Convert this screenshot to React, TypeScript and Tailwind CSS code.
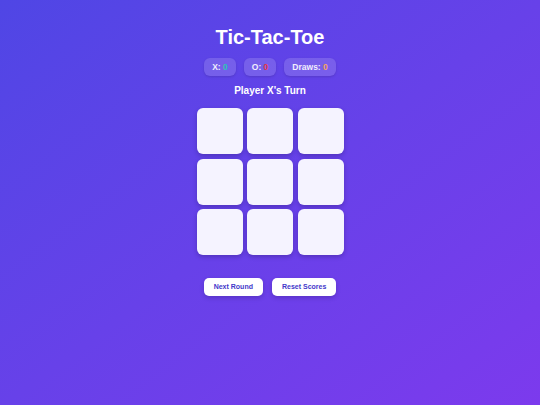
const cells = Array.from({ length: 9 }, (_, i) => i);

const App = () => {
  return (
    <div className="min-h-screen w-full bg-gradient-to-br from-[#4f46e5] to-[#7c3aed] flex flex-col items-center pt-[25px] text-white" style={{ fontFamily: '"Liberation Sans", Arial, sans-serif' }}>
      <h1 className="text-[20px] leading-[24px] font-bold">Tic-Tac-Toe</h1>

      {/* Scores */}
      <div className="mt-[9px] flex gap-2">
        <div className="h-[18px] px-2 rounded-[6px] bg-white/15 shadow-sm flex items-center text-[8.5px] font-bold text-white/90">
          X:&nbsp;<span className="text-[#2ec4b6]">0</span>
        </div>
        <div className="h-[18px] px-2 rounded-[6px] bg-white/15 shadow-sm flex items-center text-[8.5px] font-bold text-white/90">
          O:&nbsp;<span className="text-[#e63946]">0</span>
        </div>
        <div className="h-[18px] px-2 rounded-[6px] bg-white/15 shadow-sm flex items-center text-[8.5px] font-bold text-white/90">
          Draws:&nbsp;<span className="text-[#f4a261]">0</span>
        </div>
      </div>

      <p className="mt-[9px] text-[10px] leading-[12px] font-bold">Player X's Turn</p>

      {/* Board */}
      <div className="mt-[11px] grid grid-cols-3 gap-[4.5px]">
        {cells.map((c) => (
          <button key={c} className="w-[46px] h-[46px] rounded-[6px] bg-[#f5f3ff] shadow-[0_2px_4px_rgba(30,20,90,0.3)]" />
        ))}
      </div>

      <div className="mt-[23px] flex gap-[9px]">
        <button className="h-[18px] px-[10px] rounded-[5px] bg-white text-[#4338ca] text-[7px] font-bold shadow-[0_2px_4px_rgba(30,20,90,0.25)]">
          Next Round
        </button>
        <button className="h-[18px] px-[10px] rounded-[5px] bg-white text-[#4338ca] text-[7px] font-bold shadow-[0_2px_4px_rgba(30,20,90,0.25)]">
          Reset Scores
        </button>
      </div>
    </div>
  );
};

export default App;
